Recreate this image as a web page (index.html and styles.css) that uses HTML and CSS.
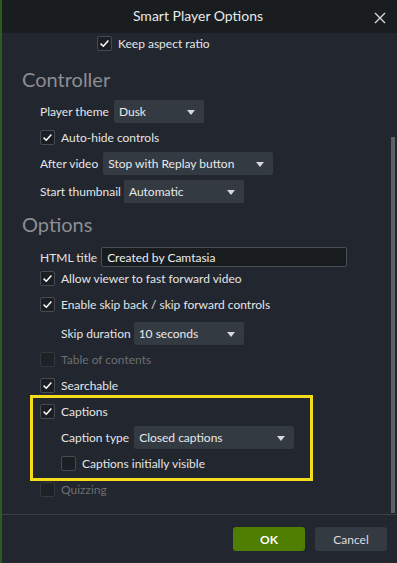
FILE: index.html
```html
<!DOCTYPE html>
<html>
<head>
<meta charset="utf-8">
<link rel="stylesheet" href="styles.css">
</head>
<body>
<div class="window">
  <div class="titlebar">
    <span class="title">Smart Player Options</span>
    <svg class="close" width="12" height="12" viewBox="0 0 12 12"><path d="M1 1 L11 11 M11 1 L1 11" stroke="#d6d8da" stroke-width="1.4" fill="none"/></svg>
  </div>
  <div class="main">
    <div class="content">
      <div class="row cb keep"><span class="box on"><svg viewBox="0 0 15 15"><path d="M3.6 7.6 L6.3 10.2 L11.4 4.6" stroke="#fff" stroke-width="1.5" fill="none"/></svg></span><span>Keep aspect ratio</span></div>

      <div class="heading h-ctrl">Controller</div>
      <div class="row sel ind1 m10"><span>Player theme</span><span class="dd w90">Dusk<i class="arrow"></i></span></div>
      <div class="row cb ind1 m7"><span class="box on"><svg viewBox="0 0 15 15"><path d="M3.6 7.6 L6.3 10.2 L11.4 4.6" stroke="#fff" stroke-width="1.5" fill="none"/></svg></span><span>Auto-hide controls</span></div>
      <div class="row sel ind1 m7"><span>After video</span><span class="dd w170">Stop with Replay button<i class="arrow"></i></span></div>
      <div class="row sel ind1 m5 tight"><span>Start thumbnail</span><span class="dd w120">Automatic<i class="arrow"></i></span></div>

      <div class="heading h-opt">Options</div>
      <div class="row sel ind1 m12 tall"><span>HTML title</span><span class="input">Created by Camtasia</span></div>
      <div class="row cb ind1 m4"><span class="box on"><svg viewBox="0 0 15 15"><path d="M3.6 7.6 L6.3 10.2 L11.4 4.6" stroke="#fff" stroke-width="1.5" fill="none"/></svg></span><span>Allow viewer to fast forward video</span></div>
      <div class="row cb ind1 m11"><span class="box on"><svg viewBox="0 0 15 15"><path d="M3.6 7.6 L6.3 10.2 L11.4 4.6" stroke="#fff" stroke-width="1.5" fill="none"/></svg></span><span>Enable skip back / skip forward controls</span></div>
      <div class="row sel ind2 m10 tight"><span>Skip duration</span><span class="dd w110">10 seconds<i class="arrow"></i></span></div>
      <div class="row cb ind1 m7 disabled"><span class="box"></span><span>Table of contents</span></div>
      <div class="row cb ind1 m11"><span class="box on"><svg viewBox="0 0 15 15"><path d="M3.6 7.6 L6.3 10.2 L11.4 4.6" stroke="#fff" stroke-width="1.5" fill="none"/></svg></span><span>Searchable</span></div>

      <div class="highlight">
        <div class="row cb"><span class="box on"><svg viewBox="0 0 15 15"><path d="M3.6 7.6 L6.3 10.2 L11.4 4.6" stroke="#fff" stroke-width="1.5" fill="none"/></svg></span><span>Captions</span></div>
        <div class="row sel sub m7"><span>Caption type</span><span class="dd w160">Closed captions<i class="arrow"></i></span></div>
        <div class="row cb sub m7"><span class="box"></span><span>Captions initially visible</span></div>
      </div>

      <div class="row cb ind1 m1 disabled"><span class="box"></span><span>Quizzing</span></div>
    </div>
    <div class="track"><div class="thumb"></div></div>
  </div>
  <div class="footer">
    <button class="btn ok">OK</button>
    <button class="btn cancel">Cancel</button>
  </div>
</div>
</body>
</html>
```

FILE: styles.css
```css
* { box-sizing: border-box; }
html, body { margin: 0; padding: 0; }
body {
  background: #22262e;
  font-family: Lato, "Open Sans", sans-serif;
  font-size: 12px;
  color: #e4e5e7;
}
.window {
  width: 397px;
  height: 563px;
  border-left: 2px solid #2e5a1c;
  display: flex;
  flex-direction: column;
  overflow: hidden;
}
.titlebar {
  height: 33px;
  background: #191d20;
  display: flex;
  align-items: center;
  justify-content: center;
  position: relative;
  padding-bottom: 2px;
}
.title {
  font-size: 14px;
  color: #e8e9ea;
  margin-left: -3px;
}
.close {
  position: absolute;
  right: 11px;
  top: 12px;
}
.main {
  height: 482px;
  display: flex;
  border-bottom: 1px solid #3b3f47;
}
.content {
  flex: 1;
  padding-top: 3px;
}
.track {
  width: 4px;
  margin-right: 2px;
  display: flex;
  flex-direction: column;
}
.thumb {
  margin-top: 104px;
  flex: 1;
  margin-bottom: 1px;
  background: #5c6067;
}
.row {
  display: flex;
  align-items: center;
}
.row.cb { height: 15px; gap: 6px; }
.row.sel { height: 23px; gap: 5px; }
.row.tight { gap: 3px; }
.row.tall { height: 20px; gap: 4px; }
.keep { margin-left: 95px; }
.ind1 { margin-left: 38px; }
.ind2 { margin-left: 59px; }
.sub { margin-left: 21px; }
.m1 { margin-top: 1px; }
.m4 { margin-top: 4px; }
.m5 { margin-top: 5px; }
.m7 { margin-top: 7px; }
.m10 { margin-top: 10px; }
.m11 { margin-top: 11px; }
.m12 { margin-top: 12px; }
.heading {
  margin-left: 20px;
  height: 22px;
  line-height: 22px;
  font-size: 20px;
  color: #8b8e93;
}
.h-ctrl { margin-top: 17px; }
.h-opt { margin-top: 10px; }
.box {
  width: 15px;
  height: 15px;
  flex: none;
  border: 1px solid #464b53;
  border-radius: 2px;
  background: #1b1f23;
  position: relative;
}
.box svg {
  position: absolute;
  left: -1px;
  top: -1px;
  width: 15px;
  height: 15px;
}
.disabled { color: #6c6f74; }
.disabled .box { border-color: #33373e; background: #1e2227; }
.dd {
  position: relative;
  height: 23px;
  background: #343a42;
  border-radius: 2px;
  padding-left: 5px;
  display: flex;
  align-items: center;
  color: #e8e9ea;
}
.w90 { width: 90px; }
.w110 { width: 110px; }
.w120 { width: 120px; }
.w160 { width: 160px; }
.w170 { width: 170px; }
.arrow {
  position: absolute;
  right: 9px;
  top: 10px;
  width: 0;
  height: 0;
  border-left: 4px solid transparent;
  border-right: 4px solid transparent;
  border-top: 5px solid #d8d9db;
}
.input {
  width: 246px;
  height: 20px;
  background: #181c1f;
  border: 1px solid #4a4e55;
  border-radius: 2px;
  padding-left: 5px;
  display: flex;
  align-items: center;
  color: #eeeeee;
}
.highlight {
  margin-top: 2px;
  margin-left: 28px;
  width: 283px;
  border: 3px solid #f4dc1c;
  padding: 6px 0 7px 7px;
}
.footer {
  flex: 1;
  display: flex;
  justify-content: flex-end;
  align-items: flex-start;
  padding-top: 12px;
  padding-right: 10px;
  gap: 10px;
}
.btn {
  width: 72px;
  height: 24px;
  border: none;
  border-radius: 3px;
  font-family: Lato, "Open Sans", sans-serif;
  font-size: 12px;
  padding: 0;
}
.ok {
  background: #4f7f02;
  color: #ffffff;
  font-weight: 700;
}
.cancel {
  background: #343a42;
  color: #dcdde0;
}
```
